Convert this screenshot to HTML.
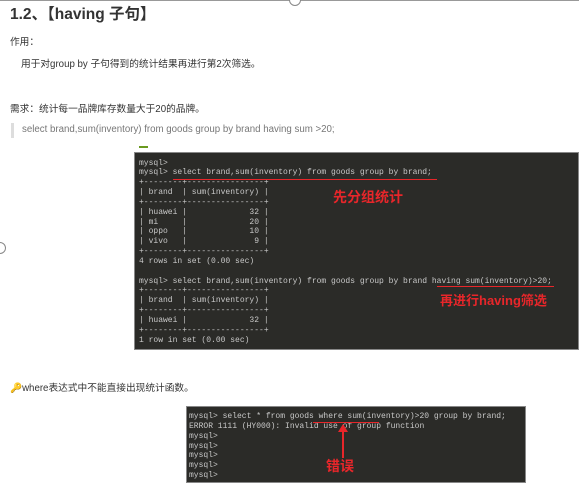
<!DOCTYPE html>
<html><head><meta charset="utf-8"><style>
body{margin:0;width:579px;height:484px;background:#fff;position:relative;overflow:hidden;font-family:"Liberation Sans","Noto Sans CJK SC",sans-serif;color:#333}
.a{position:absolute;white-space:nowrap}
.term{position:absolute;background:#2b2b28;border:1px solid #888}
.term pre{margin:0;font-family:"Liberation Mono",monospace;font-size:8px;line-height:9.85px;color:#c8c8c8;position:absolute}
.red{position:absolute;color:#e8262a;font-weight:bold;font-family:"Liberation Sans","Noto Sans CJK SC",sans-serif;white-space:nowrap}
.ul{position:absolute;height:1.5px;background:#e8262a}
</style></head><body>
<div style="position:absolute;left:0;top:0;width:579px;height:1px;background:#999"></div>
<div style="position:absolute;left:289px;top:-6px;width:10px;height:10px;border:1px solid #888;border-radius:50%;background:#fff"></div>
<div style="position:absolute;left:-6px;top:242px;width:10px;height:10px;border:1px solid #888;border-radius:50%;background:#fff"></div>
<div class="a" style="left:10px;top:2px;font-size:15.5px;font-weight:bold;color:#333">1.2、【having 子句】</div>
<div class="a" style="left:10px;top:34px;font-size:9.7px">作用：</div>
<div class="a" style="left:21px;top:56px;font-size:9.7px">用于对group by 子句得到的统计结果再进行第2次筛选。</div>
<div class="a" style="left:10px;top:101px;font-size:9.7px">需求：统计每一品牌库存数量大于20的品牌。</div>
<div style="position:absolute;left:11px;top:123px;width:3px;height:15px;background:#ddd"></div>
<div class="a" style="left:22px;top:124px;font-size:9.7px;color:#777">select brand,sum(inventory) from goods group by brand having sum &gt;20;</div>
<div style="position:absolute;left:139px;top:146px;width:9px;height:2px;background:#6a9a1f"></div>
<div class="term" style="left:134px;top:152px;width:443px;height:196px">
<pre style="left:4px;top:5.5px">mysql&gt;
mysql&gt; select brand,sum(inventory) from goods group by brand;
+--------+----------------+
| brand  | sum(inventory) |
+--------+----------------+
| huawei |             32 |
| mi     |             20 |
| oppo   |             10 |
| vivo   |              9 |
+--------+----------------+
4 rows in set (0.00 sec)

mysql&gt; select brand,sum(inventory) from goods group by brand having sum(inventory)&gt;20;
+--------+----------------+
| brand  | sum(inventory) |
+--------+----------------+
| huawei |             32 |
+--------+----------------+
1 row in set (0.00 sec)</pre>
</div>
<div class="ul" style="left:173px;top:178.5px;width:264px"></div>
<div class="red" style="left:333px;top:187px;font-size:14px">先分组统计</div>
<div class="ul" style="left:437px;top:285.5px;width:117px"></div>
<div class="red" style="left:440px;top:290px;font-size:13px">再进行having筛选</div>
<div class="a" style="left:10px;top:380px;font-size:9.7px"><span style="color:#c8901a">🔑</span>where表达式中不能直接出现统计函数。</div>
<div class="term" style="left:186px;top:406px;width:338px;height:75px">
<pre style="left:2px;top:5px">mysql&gt; select * from goods where sum(inventory)&gt;20 group by brand;
ERROR 1111 (HY000): Invalid use of group function
mysql&gt;
mysql&gt;
mysql&gt;
mysql&gt;
mysql&gt;</pre>
</div>
<div class="ul" style="left:313px;top:421.5px;width:66px"></div>
<div style="position:absolute;left:342px;top:428px;width:2px;height:30px;background:#e8262a"></div>
<div style="position:absolute;left:338px;top:424px;width:0;height:0;border-left:5px solid transparent;border-right:5px solid transparent;border-bottom:8px solid #e8262a"></div>
<div class="red" style="left:326px;top:456px;font-size:14px">错误</div>
</body></html>
